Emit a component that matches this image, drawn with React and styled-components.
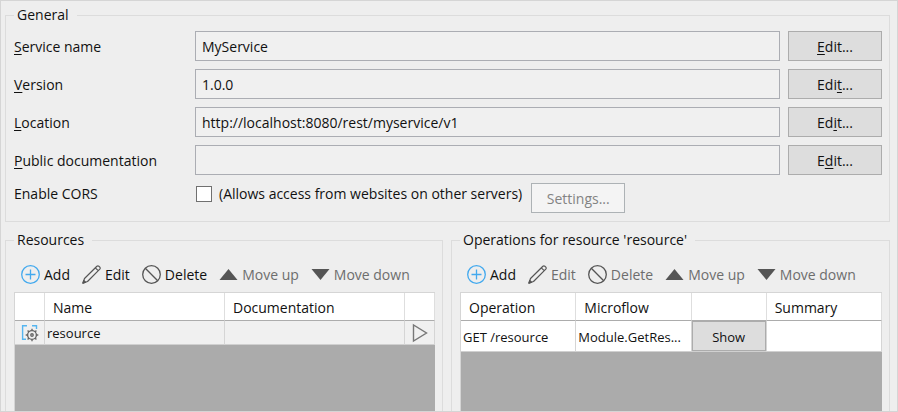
import React from "react";
import styled, { createGlobalStyle } from "styled-components";

const GlobalStyle = createGlobalStyle`
  *, *::before, *::after { box-sizing: border-box; }
  body {
    margin: 0;
    background: #eeeeee;
    color: #111111;
    font: 14px/20px "Open Sans", "Noto Sans", sans-serif;
  }
  button, input { font: inherit; color: inherit; }
`;

const Page = styled.main`
  display: flex;
  flex-direction: column;
  gap: 8px;
  height: 100vh;
  overflow: hidden;
  padding: 4px 7px 0 4px;
  border: 1px solid #d5d5d5;
`;

const Group = styled.fieldset`
  display: flex;
  flex-direction: column;
  min-width: 0;
  margin: 0;
  padding: 0 7px ${(p) => (p.$open ? "0" : "8px")} 8px;
  border: 1px solid #dcdcdc;
  ${(p) => p.$open && "border-bottom: 0;"}
`;

const Legend = styled.legend`
  padding: 0 8px 0 3px;
  line-height: 20px;
`;

const Form = styled.div`
  display: grid;
  row-gap: 8px;
  padding-top: 6px;
`;

const FormRow = styled.div`
  display: grid;
  grid-template-columns: 173px minmax(0, 1fr) 94px;
  column-gap: 8px;
  align-items: center;
`;

const FieldLabel = styled.label`
  padding-top: 2px;
`;

const OptionRow = styled.div`
  display: grid;
  grid-template-columns: 173px max-content 94px;
  column-gap: 9px;
  align-items: start;
  line-height: 22px;
`;

const CheckLabel = styled.label`
  display: flex;
  align-items: center;
  gap: 7px;
`;

const CheckBox = styled.input`
  appearance: none;
  width: 16px;
  height: 16px;
  margin: 0;
  border: 1px solid #707070;
  background: #ffffff;
  &:checked { background: #2a8dd4; }
`;

const Field = styled.input`
  width: 100%;
  height: 30px;
  padding: 0 6px;
  border: 1px solid #abadb3;
  border-radius: 0;
  background: #f0f0f0;
`;

const Button = styled.button`
  width: 100%;
  height: 30px;
  padding: 2px 0 0;
  border: 1px solid #acacac;
  background: #dddddd;
  &:disabled {
    border-color: #adb2b5;
    background: #f4f4f4;
    color: #838383;
  }
`;

const Key = styled.span`
  text-decoration: underline 1px;
  text-underline-offset: 2px;
`;

const Panels = styled.div`
  display: grid;
  grid-template-columns: minmax(0, 438fr) minmax(0, 439fr);
  gap: 8px;
  flex: 1;
  min-height: 0;
`;

const Toolbar = styled.div`
  display: flex;
  align-items: center;
  gap: 12px;
  height: 42px;
  padding: 8px 0 1px 7px;
`;

const Tool = styled.button`
  display: flex;
  align-items: center;
  gap: 4px;
  padding: 0;
  border: 0;
  background: none;
  white-space: nowrap;
  &:disabled { color: #6d6d6d; }
`;

const ToolLabel = styled.span`
  padding-top: 1px;
`;

const Icon = styled.svg`
  flex: none;
  display: block;
  fill: none;
  stroke: #555555;
`;

const GridArea = styled.div`
  flex: 1;
  min-height: 0;
  border-left: 1px solid #d5d5d5;
  background: #ababab;
`;

const Table = styled.table`
  width: 100%;
  table-layout: fixed;
  border-collapse: separate;
  border-spacing: 0;
  border-top: 1px solid #d5d5d5;
`;

const Th = styled.th`
  width: ${(p) => p.$width || "auto"};
  height: 28px;
  padding: 2px 8px 0;
  border-right: 1px solid #dedede;
  border-bottom: 1px solid #acacac;
  background: #ffffff;
  font-weight: 400;
  text-align: left;
`;

const Td = styled.td`
  height: ${(p) => (p.$selected ? "24px" : "31px")};
  padding: ${(p) => (p.$flush ? "0" : "1px 2px 0")};
  border-right: 1px solid #d5d5d5;
  border-bottom: 1px solid #d0d0d0;
  background: ${(p) => (p.$selected ? "#f0f0f0" : "#ffffff")};
  font-size: 13px;
  white-space: nowrap;
  ${Button} { display: block; }
`;

const IconCell = styled.div`
  display: grid;
  place-items: center;
`;

const PlayButton = styled.button`
  display: grid;
  place-items: center;
  width: 100%;
  height: 22px;
  padding: 0;
  border: 0;
  background: none;
`;

const AddIcon = () => (
  <Icon width="19" height="19" viewBox="0 0 19 19" aria-hidden="true">
    <g stroke="#42a9ee" strokeWidth="1.3">
      <circle cx="9.5" cy="9.5" r="8.8" />
      <path d="M9.5 4.5v10M4.5 9.5h10" />
    </g>
  </Icon>
);

const PencilIcon = () => (
  <Icon width="19" height="19" viewBox="0 0 19 19" strokeWidth="1.2" strokeLinejoin="round" aria-hidden="true">
    <path d="M.9 18.1l1.6-4.6L14.9 1.2q1-.8 1.9 0l1 1q.8.9 0 1.9L5.5 16.5zM13.3 2.8l2.9 2.9" />
    <path d="M.9 18.1l.9-2.6 1.7 1.7z" fill="#555555" />
  </Icon>
);

const DeleteIcon = () => (
  <Icon width="19" height="19" viewBox="0 0 19 19" strokeWidth="1.3" aria-hidden="true">
    <circle cx="9.5" cy="9.5" r="8.8" />
    <path d="M3.3 3.3l12.4 12.4" />
  </Icon>
);

const UpIcon = () => (
  <Icon width="19" height="19" viewBox="0 0 19 19" aria-hidden="true">
    <path d="M.5 15L9.5 4l9 11z" fill="#555555" stroke="none" />
  </Icon>
);

const DownIcon = () => (
  <Icon width="19" height="19" viewBox="0 0 19 19" aria-hidden="true">
    <path d="M.5 4L9.5 15l9-11z" fill="#555555" stroke="none" />
  </Icon>
);

const ResourceIcon = () => (
  <Icon width="18" height="18" viewBox="0 0 18 18" aria-hidden="true">
    <path d="M6 1.7H1.6v13.6H5M11 1.7h4.5V5" stroke="#55b5f0" strokeWidth="1.4" />
    <g stroke="#666666" strokeWidth="1.4">
      <circle cx="11" cy="11" r="4.4" />
      <circle cx="11" cy="11" r="1.2" />
      <path d="M11 4.7v2M11 15.3v2M4.7 11h2M15.3 11h2M6.6 6.6L8 8M14 14l1.4 1.4M15.4 6.6L14 8M8 14l-1.4 1.4" />
    </g>
  </Icon>
);

const PlayIcon = () => (
  <Icon width="18" height="20" viewBox="0 0 18 20" aria-hidden="true">
    <path d="M2.5 2v16L15.5 10z" stroke="#777777" strokeWidth="1.4" />
  </Icon>
);

const fields = [
  { id: "name", key: "S", label: "ervice name", value: "MyService", edit: ["", "E", "dit..."] },
  { id: "version", key: "V", label: "ersion", value: "1.0.0", edit: ["Edi", "t", "..."] },
  { id: "location", key: "L", label: "ocation", value: "http://localhost:8080/rest/myservice/v1", edit: ["Ed", "i", "t..."] },
  { id: "docs", key: "P", label: "ublic documentation", value: "", edit: ["E", "d", "it..."] },
];

const tools = [
  { label: "Add", icon: AddIcon },
  { label: "Edit", icon: PencilIcon },
  { label: "Delete", icon: DeleteIcon },
  { label: "Move up", icon: UpIcon },
  { label: "Move down", icon: DownIcon },
];

const Tools = ({ enabled }) => (
  <Toolbar role="toolbar">
    {tools.map(({ label, icon: Glyph }) => (
      <Tool key={label} type="button" disabled={!enabled.includes(label)}>
        <Glyph />
        <ToolLabel>{label}</ToolLabel>
      </Tool>
    ))}
  </Toolbar>
);

export default function App() {
  return (
    <>
      <GlobalStyle />
      <Page>
        <Group>
          <Legend>General</Legend>
          <Form>
            {fields.map((f) => (
              <FormRow key={f.id}>
                <FieldLabel htmlFor={f.id}>
                  <Key>{f.key}</Key>
                  {f.label}
                </FieldLabel>
                <Field id={f.id} defaultValue={f.value} readOnly />
                <Button type="button">
                  {f.edit[0]}
                  <Key>{f.edit[1]}</Key>
                  {f.edit[2]}
                </Button>
              </FormRow>
            ))}
            <OptionRow>
              <span>Enable CORS</span>
              <CheckLabel>
                <CheckBox type="checkbox" />
                (Allows access from websites on other servers)
              </CheckLabel>
              <Button type="button" disabled>Settings...</Button>
            </OptionRow>
          </Form>
        </Group>
        <Panels>
          <Group $open>
            <Legend>Resources</Legend>
            <Tools enabled={["Add", "Edit", "Delete"]} />
            <GridArea>
              <Table>
                <thead>
                  <tr>
                    <Th $width="30px" />
                    <Th>Name</Th>
                    <Th>Documentation</Th>
                    <Th $width="30px" />
                  </tr>
                </thead>
                <tbody>
                  <tr>
                    <Td $selected $flush><IconCell><ResourceIcon /></IconCell></Td>
                    <Td $selected>resource</Td>
                    <Td $selected />
                    <Td $selected $flush>
                      <PlayButton type="button" aria-label="Open resource"><PlayIcon /></PlayButton>
                    </Td>
                  </tr>
                </tbody>
              </Table>
            </GridArea>
          </Group>
          <Group $open>
            <Legend>Operations for resource 'resource'</Legend>
            <Tools enabled={["Add"]} />
            <GridArea>
              <Table>
                <thead>
                  <tr>
                    <Th>Operation</Th>
                    <Th>Microflow</Th>
                    <Th $width="75px" />
                    <Th>Summary</Th>
                  </tr>
                </thead>
                <tbody>
                  <tr>
                    <Td>GET /resource</Td>
                    <Td>Module.GetRes...</Td>
                    <Td $flush><Button type="button">Show</Button></Td>
                    <Td />
                  </tr>
                </tbody>
              </Table>
            </GridArea>
          </Group>
        </Panels>
      </Page>
    </>
  );
}
